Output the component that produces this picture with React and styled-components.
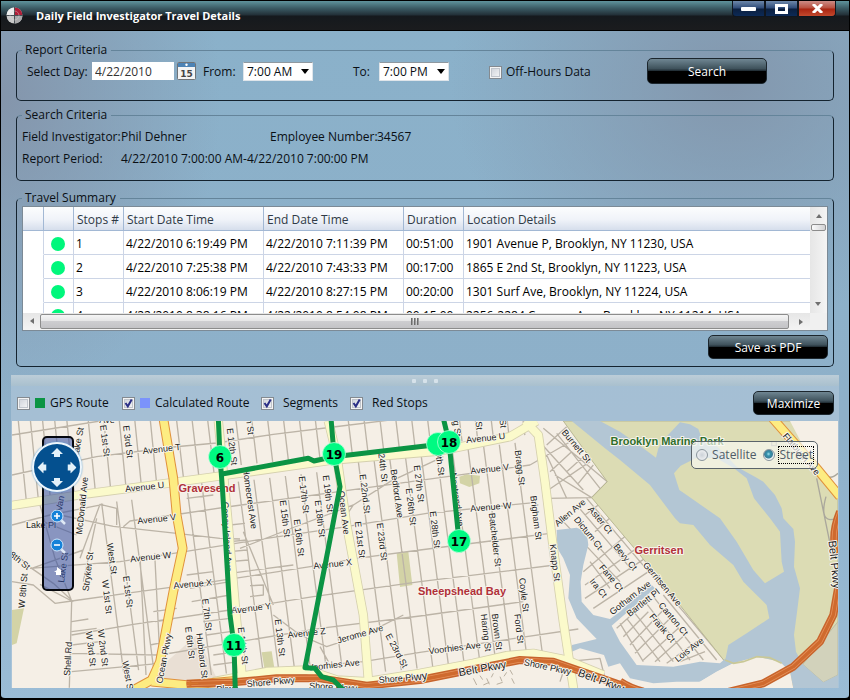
import React, { useState } from "react";
import styled, { createGlobalStyle } from "styled-components";

const GlobalStyle = createGlobalStyle`
  * { box-sizing: border-box; }
  body { margin: 0; background: #000; }
  body, button, input, select {
    font-family: "Open Sans", "Noto Sans", sans-serif;
    font-size: 12px;
    line-height: 16px;
    color: #0a0f14;
  }
  fieldset, legend, button, input { margin: 0; }
`;

/* ---------- window frame ---------- */

const Window = styled.main`
  display: flex;
  flex-direction: column;
  min-height: 100vh;
  border: 1px solid #000;
  border-bottom-width: 2px;
  border-radius: 0 0 5px 5px;
  background:
    radial-gradient(280px 240px at 86% 12%, #8397ad, rgba(132, 151, 173, 0)),
    radial-gradient(220px 300px at 0 14%, #8495ab, rgba(132, 149, 171, 0)),
    linear-gradient(#8ab1ca, #8eb0c9 60%, #9abcd6);
`;

const TitleBar = styled.header`
  display: flex;
  align-items: flex-start;
  height: 30px;
  padding: 0 13px 0 5px;
  border-bottom: 1px solid #000;
  background: linear-gradient(#5f939c 0, #3c5d66 7px, #222f37 14px, #15191d 15px, #1b1c1e 30px);
`;

const Brand = styled.div`
  display: flex;
  flex: 1;
  align-items: center;
  gap: 13px;
  height: 28px;
`;

const Title = styled.h1`
  margin: 0;
  padding-top: 2px;
  color: #fff;
  font-size: 11px;
  font-weight: 700;
  line-height: 16px;
`;

const CaptionButton = styled.button`
  display: flex;
  align-items: center;
  justify-content: center;
  width: ${(p) => (p.$close ? 38 : 33)}px;
  height: 16px;
  padding: 0;
  border: 1px solid #10161e;
  border-top: 0;
  border-radius: ${(p) => (p.$close ? "0 0 4px 0" : p.$first ? "0 0 0 4px" : "0")};
  background: ${(p) =>
    p.$close
      ? "linear-gradient(#cc8c86 0, #b8503f 7px, #a92411 8px, #c24a2e 15px)"
      : "linear-gradient(#6d88aa 0, #2f4b78 7px, #0b1f3f 8px, #0c2a56 15px)"};
`;

/* ---------- form parts ---------- */

const Body = styled.div`
  padding: 11px 15px 8px;
`;

const Group = styled.fieldset`
  min-width: 0;
  padding: 0 5px ${(p) => p.$bottom}px;
  margin-bottom: ${(p) => p.$gap || 0}px;
  border: 1px solid #14232f;
  border-top-color: #64849a;
  border-radius: 5px;
`;

const Legend = styled.legend`
  padding: 0 4px 0 3px;
  font-size: 12px;
  line-height: 16px;
`;

const CriteriaRow = styled.div`
  display: grid;
  grid-template-columns: 65px 85px 26px 40px 110px 26px 110px 158px auto;
  justify-content: start;
  align-items: center;
  height: 26px;
  padding-left: 5px;
  white-space: nowrap;
  > label { padding-top: 2px; }
`;

const DateInput = styled.input`
  width: 82px;
  height: 18px;
  padding: 0 3px;
  border: 0;
  background: #fff;
  color: #333;
`;

const IconButton = styled.button`
  display: flex;
  padding: 0;
  border: 0;
  background: none;
`;

const SelectBox = styled.span`
  position: relative;
  display: block;
  width: 70px;
  height: 19px;
  svg { position: absolute; right: 4px; top: 7px; pointer-events: none; }
`;

const Select = styled.select`
  appearance: none;
  width: 100%;
  height: 100%;
  padding: 1px 0 0 3px;
  border: 1px solid #dfe5ea;
  border-top-color: #8f989f;
  border-radius: 0;
  background: #fff;
`;

const CheckLabel = styled.label`
  display: flex;
  align-items: center;
  gap: ${(p) => p.$gap}px;
  white-space: nowrap;
`;

const CheckBox = styled.span`
  position: relative;
  display: block;
  width: 13px;
  height: 13px;
  input {
    appearance: none;
    display: block;
    width: 13px;
    height: 13px;
    border: 1px solid #848a90;
    background: linear-gradient(135deg, #c9ced6, #fafafa);
    box-shadow: inset 0 0 0 1px #f4f4f4, inset 0 0 0 2px #c0c5cc;
  }
  svg { position: absolute; left: 1px; top: 1px; pointer-events: none; }
`;

const Swatch = styled.i`
  width: 10px;
  height: 10px;
  background: ${(p) => p.$color};
`;

const GlossButton = styled.button`
  width: ${(p) => p.$width || 120}px;
  height: ${(p) => p.$height || 24}px;
  padding: 2px 0 0;
  border: 1px solid #1c262d;
  border-radius: 5px;
  background: linear-gradient(#6f8692 0, #3f525c 40%, #202c33 49%, #000 50%, #000 100%);
  color: #fff;
`;

const InfoList = styled.dl`
  display: grid;
  grid-template-columns: 99px 149px 107px 1fr;
  row-gap: 6px;
  margin: 0;
  padding-top: 6px;
  white-space: nowrap;
  dt, dd { margin: 0; line-height: 16px; }
`;

const Period = styled.dd`
  grid-column: 2 / -1;
`;

/* ---------- travel table ---------- */

const GridFrame = styled.div`
  display: grid;
  grid-template-columns: 1fr 17px;
  grid-template-rows: 106px 17px;
  border: 1px solid #7c8a96;
  background: #f0f0f0;
`;

const TableClip = styled.div`
  overflow: hidden;
  background: #fff;
`;

const StopsTable = styled.table`
  width: 100%;
  border-collapse: separate;
  border-spacing: 0;
  table-layout: fixed;
  th, td {
    height: 24px;
    padding: 2px 0 0 2px;
    border-right: 1px solid #ccd5e6;
    border-bottom: 1px solid #ccd5e6;
    text-align: left;
    white-space: nowrap;
    font-weight: 400;
    color: #000;
  }
  th {
    padding-left: 3px;
    border-color: #a2b8d4;
    background: linear-gradient(#fcfdfe, #f0f3f9 55%, #d6deec);
    color: #2f3a46;
  }
  th:last-child, td:last-child { border-right: 0; }
  td:first-child { border-bottom-color: #fff; }
`;

const Col = styled.col`
  width: ${(p) => (p.$w ? p.$w + "px" : "auto")};
`;

const StopDot = styled.span`
  display: block;
  width: 14px;
  height: 14px;
  margin-left: 5px;
  border-radius: 50%;
  background: #00f77c;
`;

const VScroll = styled.div`
  display: flex;
  flex-direction: column;
  align-items: center;
  background: linear-gradient(90deg, #e6e6e6, #f4f4f4);
`;

const HScroll = styled.div`
  display: flex;
  align-items: center;
  background: linear-gradient(#e6e6e6, #f4f4f4);
`;

const ScrollArrow = styled.button`
  display: flex;
  align-items: center;
  justify-content: center;
  width: 17px;
  height: 17px;
  padding: 0;
  border: 0;
  background: none;
  transform: rotate(${(p) => p.$turn}deg);
`;

const VThumb = styled.div`
  width: 15px;
  height: 7px;
  margin-bottom: auto;
  border: 1px solid #8c8c8c;
  border-radius: 2px;
  background: linear-gradient(90deg, #fafafa, #d2d2d4);
`;

const HThumb = styled.div`
  display: flex;
  flex: 1;
  align-items: center;
  justify-content: center;
  gap: 1px;
  height: 15px;
  margin-right: 4px;
  border: 1px solid #8c8c8c;
  border-radius: 2px;
  background: linear-gradient(#f5f5f5, #e6e6e7 45%, #cdcdd0 50%, #c3c3c6);
`;

const Grip = styled.i`
  width: 2px;
  height: 7px;
  background: linear-gradient(90deg, #555, #b5b5b5);
`;

const Actions = styled.div`
  display: flex;
  justify-content: flex-end;
  padding-top: 4px;
`;

/* ---------- map pane ---------- */

const MapPane = styled.section`
  display: flex;
  flex: 1;
  flex-direction: column;
  margin: 0 10px 10px;
  background: rgba(180, 202, 220, 0.6);
`;

const Splitter = styled.div`
  display: flex;
  align-items: center;
  justify-content: center;
  gap: 7px;
  height: 11px;
  background: linear-gradient(#bccdd8, #a9c0ce);
`;

const SplitDot = styled.i`
  width: 4px;
  height: 4px;
  border-radius: 1px;
  background: #d6e2ea;
`;

const MapToolbar = styled.div`
  display: grid;
  grid-template-columns: 105px 139px 89px 1fr auto;
  align-items: center;
  height: 35px;
  padding: 0 5px 1px 6px;
`;

const MapView = styled.div`
  position: relative;
  display: flex;
  flex: 1;
  min-height: 267px;
  margin: 0 1px;
  overflow: hidden;
  background: #f5efe6;
`;

const MapSvg = styled.svg`
  flex: 1;
  min-width: 0;
  height: auto;
`;

const RoadLabel = styled.text`
  font-family: "Liberation Sans", Arial, sans-serif;
  font-size: ${(p) => p.$size || 9}px;
  font-weight: ${(p) => (p.$bold ? 700 : 400)};
  fill: ${(p) => p.$color || "#1c1c1c"};
  stroke: #f8f4ec;
  stroke-width: 2px;
  stroke-linejoin: round;
  paint-order: stroke;
  text-anchor: middle;
`;

const StopNumber = styled.text`
  font-family: "DejaVu Sans", Verdana, sans-serif;
  font-size: 12px;
  font-weight: 700;
  fill: #000;
  text-anchor: middle;
`;

const NavPanel = styled.div`
  position: absolute;
  left: 30px;
  top: 15px;
  display: flex;
  flex-direction: column;
  align-items: center;
  width: 32px;
  height: 155px;
  border: 2px solid #05070d;
  border-radius: 5px;
  background: rgba(48, 74, 160, 0.55);
`;

const PanPad = styled.div`
  flex: none;
  display: grid;
  grid-template-columns: repeat(3, 15px);
  grid-template-rows: repeat(3, 15px);
  place-content: center;
  place-items: center;
  width: 50px;
  height: 50px;
  margin: 4px 2px 17px 0;
  border: 2px solid #eef6fc;
  border-radius: 50%;
  background: #04508f;
  box-shadow: 0 0 2px #4d9ad6;
`;

const PanButton = styled.button`
  grid-area: ${(p) => p.$area};
  display: flex;
  padding: 0;
  border: 0;
  background: none;
  transform: rotate(${(p) => p.$turn}deg);
`;

const ZoomButton = styled(IconButton)`
  margin-bottom: 13px;
`;

const LayerPicker = styled.div`
  position: absolute;
  right: 20px;
  top: 20px;
  display: flex;
  align-items: center;
  gap: 6px;
  height: 28px;
  padding: 0 3px 0 4px;
  border: 1px solid #5b646b;
  border-radius: 5px;
  background: rgba(250, 250, 246, 0.66);
`;

const RadioLabel = styled.label`
  display: flex;
  align-items: center;
  gap: 3px;
  color: #4f5c68;
  span { border: 1px dotted ${(p) => (p.$focus ? "#000" : "transparent")}; }
  input {
    appearance: none;
    width: 12px;
    height: 12px;
    border: 1px solid #8a959d;
    border-radius: 50%;
    background: radial-gradient(circle, #ccd2d8 0, #e6e9ec 4px);
  }
  input:checked {
    background: radial-gradient(circle at 45% 40%, #9fe0ee 0, #3592ac 2px, #3d7f98 4px, #eef3f5 5px);
  }
`;

/* ---------- map data: survey units are thirds of a pixel ---------- */

const OX = 36;
const OY = 18;

const slantSet = (x0, x1, step, top, bottom, slope = 0.125) => {
  const parts = [];
  for (let x = x0; x <= x1; x += step) {
    const t = top - (x - x0) * 0.12;
    const b = bottom - (x - x0) * 0.1;
    parts.push(`M${x} ${t}L${x + (b - t) * slope} ${b}`);
  }
  return parts.join("");
};

const STREETS = [
  slantSet(55, 210, 36, 18, 262, 0.1),
  slantSet(265, 480, 46, 18, 225, 0.1),
  slantSet(530, 650, 46, 18, 190, 0.12),
  slantSet(708, 960, 47, 18, 150, 0.12),
  slantSet(1045, 1570, 47, 18, 112, 0.12),
  slantSet(305, 400, 45, 265, 770, 0.13),
  slantSet(420, 500, 44, 420, 780, 0.05),
  slantSet(560, 640, 45, 210, 780, 0.13),
  slantSet(715, 960, 47, 200, 765, 0.13),
  slantSet(1075, 1585, 47, 140, 770, 0.13),
].join("");

const LOCAL_ROADS = [
  "M36 180L290 125L520 96L650 84L820 58L1000 36L1260 4",
  "M36 60L300 18M36 330L150 300L310 268",
  "M180 300L340 334L530 355L660 370L720 372",
  "M370 335L390 318L540 297L680 276L1000 232L1390 178L1590 150",
  "M90 460L360 440L540 412L800 370L1020 338L1280 295L1610 262",
  "M120 508L215 558L400 532L640 500L950 452L1070 430L1260 405L1650 355",
  "M215 660L400 628L690 585L940 545L1260 500L1665 450",
  "M210 715L480 720L700 683L960 640L1260 603L1570 560",
  "M215 770L480 745M890 758L1090 740L1260 712L1735 642",
  "M120 270L165 430L215 558L208 818M36 408L95 460L160 505L220 560M36 500L100 510L165 565L215 558",
  "M95 460L250 405M130 320L230 360M240 430L300 268L350 280L350 330M290 310L250 500",
  "M215 620L265 612M215 650L290 640M215 690L300 680M460 590L530 580M465 620L520 612M450 690L500 680",
  "M560 250L640 240M560 480L640 470M570 520L690 500M575 560L690 540M610 620L690 610M620 660L690 650M640 720L695 712M640 750L700 742",
  "M690 330L735 325M690 380L740 375M690 410L740 405M690 440L745 435M690 475L880 450M730 350L820 570M750 512L790 510L790 540L750 545",
  "M720 400L900 330L1060 270L1170 200L1330 125M1060 270L1040 300M820 600L900 660L980 695L1100 655L1210 600M960 695L985 740",
  "M1630 40L1822 200L1775 248L1640 250M1645 225L1770 140M1590 150L1720 75M1670 55L1800 220M1700 35L1640 90M1665 180L1775 248M1640 120L1700 250",
  "M1600 60L1750 225M1715 110L1650 170M1745 130L1700 170M1780 150L1735 205",
  "M1680 800L1700 740L1800 730L1815 790M1720 740L1725 820M1700 730L1690 690",
  "M1760 250L1920 440L2050 590L2175 738M1730 270L1900 470M1690 320L1860 500M1740 330L1860 470M1770 440L1830 520",
  "M1755 300L1815 255M1785 350L1850 290M1750 470L1880 360M1755 510L1910 400M1755 550L1935 430M1780 580L1960 460",
  "M1850 640L1900 595M1870 665L1945 590M1890 690L1990 585M1905 715L2015 605M1930 735L2035 640M1965 740L2060 655M2000 745L2090 680M2040 740L2115 710",
  "M1860 625L1930 740M1880 610L1980 740M1905 595L2020 740M1935 560L2070 735M1960 545L2110 735M1990 540L2150 735",
  "M2450 190L2490 380L2510 400M2460 200L2505 420M2475 180L2514 175M2480 240Q2460 300 2490 315L2514 312M2490 200L2514 190",
].join("");

const FOOTPRINTS =
  "M1420 790l10 20M1440 782l8 12M1460 790l8 18M1480 775l-6 12M1500 785l6 14M1520 772l-8 12M1535 790l8 16M1450 810l18 -8M1490 808l18 -6M1530 765l8 14";

const PARK = "M1690 18L1822 200L1775 248L1920 420L2175 740L2200 745L2270 725L2340 740L2370 770L2380 820L2514 820L2514 18Z";

const WATER =
  "M1715 18L1800 18L1860 50L1920 92L1968 128L1975 100L1995 70L2040 22L2070 28L2095 42L2105 70L2150 92L2210 155L2270 188L2290 200L2325 240L2345 280L2350 310L2380 342L2385 380L2382 455L2400 520L2390 600L2382 660L2388 710L2408 748L2470 802L2514 780L2514 820L2380 820L2370 770L2340 740L2270 725L2200 745L2150 770L2100 800L2030 800L1960 805L1890 790L1860 745L1825 755L1812 720L1740 700L1712 712L1716 690L1790 672L1730 610L1705 550L1710 480L1690 430L1672 400L1670 345L1730 338L1760 350L1765 390L1750 450L1742 500L1745 560L1780 600L1830 612L1860 590L1950 505L1965 520L1835 632L1860 680L1910 750L2020 755L2100 740L2160 745L2177 730L2185 690L2240 655L2308 610L2300 570L2260 530L2230 500L2200 450L2130 390L2080 330L2040 325L2025 310L1950 210L1860 135L1815 100Z";

const ISLAND = "M2022 175L2042 152L2090 128L2150 130L2200 158L2240 190L2262 250L2310 310L2340 350L2345 440L2352 470L2295 505L2260 465L2210 380L2160 310L2060 240L2038 225Z";

const PALE_ROADS = [
  "M30 272L250 238L500 205L660 183L1000 135L1320 108L1530 65L1590 30L1610 18",
  "M655 18L682 300L708 600L728 800",
  "M985 18L1010 120L1040 330L1090 600L1105 795",
  "M1575 18L1615 60L1635 200L1660 400L1690 620L1722 830",
  "M640 800L800 770L920 765L1010 795L1100 800L1260 775L1420 745L1520 722L1600 715L1700 735L1810 780",
];

const YELLOW_ROADS = [
  "M490 10L520 190L530 300L548 400L520 530L480 740L455 795L400 825",
  "M455 800L560 810L700 798",
  "M2318 10L2450 160L2520 245",
];

const HIGHWAYS = [
  "M560 806L700 802L830 790L960 790L1100 812L1260 795L1410 765L1560 735L1660 740L1760 775L1890 820",
  "M1860 800Q1890 820 1930 830M2180 832L2290 805L2380 755L2460 680L2500 600L2514 520",
  "M2520 290Q2500 340 2503 380L2516 430",
];

const GPS_ROUTE = [
  "M655 10L660 125L668 230L690 600L702 690L706 830",
  "M662 178L925 130L942 138L1002 125L1320 88",
  "M993 10L1002 118L1020 215L985 400L915 758L945 760L965 785L1000 795L1035 830",
  "M1330 10L1347 80L1377 378",
];

const LABELS = [
  ["Avenue T", 487, 112, -6], ["Avenue U", 435, 226, -6], ["Avenue V", 472, 320, -6],
  ["Avenue W", 454, 434, -6], ["Avenue X", 580, 516, -5], ["Avenue Y", 757, 588, -6],
  ["Avenue Z", 922, 664, -6], ["Avenue X", 1000, 455, -6], ["Avenue U", 1457, 78, -6],
  ["Avenue V", 1470, 172, -6], ["Avenue W", 1473, 286, -5], ["Ave", 320, 24, 0],
  ["E 1st St", 307, 77, 83], ["E 3rd St", 374, 82, 83], ["Lake St", 244, 85, -80],
  ["Van", 190, 268, -80], ["McDonald Ave", 254, 274, -84], ["Lake Pl", 122, 340, 0],
  ["Lake St", 199, 458, -82], ["8th St", 54, 444, 38], ["W 8th St", 78, 528, -85],
  ["Stryker St", 274, 472, -83], ["West St", 328, 432, 82], ["W 1st St", 312, 545, 83],
  ["E 1st St", 374, 532, 83], ["W 3rd St", 264, 703, 83], ["W 2nd St", 300, 698, 83],
  ["Shell Rd", 214, 733, -87], ["West St", 374, 785, 80], ["Ocean Pkwy", 502, 732, -79],
  ["E 7th St", 612, 600, 83], ["E 6th St", 560, 683, 83], ["Hubbard St", 597, 723, 83],
  ["E 12th St", 688, 96, 83], ["Homecrest Ave", 742, 252, 82], ["n St", 742, 36, 83],
  ["Coney Island Ave", 672, 366, 87], ["E 15th St", 846, 313, 83], ["E 16th St", 888, 370, 83],
  ["E 17th St", 903, 240, 83], ["E 18th St", 950, 313, 83], ["E 19th St", 974, 238, 83],
  ["Ocean Ave", 1023, 294, 83], ["E 22nd St", 1086, 238, 83], ["E 21st St", 1072, 374, 83],
  ["E 23rd St", 1138, 380, 83], ["24th St", 1140, 160, 83], ["Bedford Ave", 1182, 236, 82],
  ["E 26th St", 1224, 276, 83], ["E 27th St", 1249, 206, 83], ["9th St", 1310, 146, 82],
  ["E 28th St", 1297, 346, 83], ["Nostrand Ave", 1362, 256, 82], ["g St", 1362, 42, 82],
  ["St", 1428, 34, 83], ["St", 1500, 28, 83], ["Bragg St", 1550, 160, 83],
  ["Brigham St", 1600, 308, 83], ["Batchelder St", 1475, 374, 83], ["Knapp St", 1655, 444, 83],
  ["Coyle St", 1563, 540, 83], ["Brown St", 1482, 652, 83], ["Haring St", 1448, 654, 83],
  ["Ford St", 1548, 643, 83], ["E 13th St", 832, 668, 83], ["E 14th St", 720, 694, 83],
  ["Jerome Ave", 1083, 666, -16], ["E 23rd St", 1182, 710, 62], ["Voorhies Ave", 1002, 758, -6],
  ["Voorhies Ave", 1366, 708, -7], ["Shore Pkwy", 814, 810, -5], ["Shore Pkwy", 1000, 826, 3],
  ["Shore Pkwy", 1208, 798, -5], ["Shore Pkwy", 1640, 766, 12], ["Ave", 718, 595, 0],
  ["Belt Pkwy", 1448, 772, -10, 11], ["Belt Pkwy", 1800, 806, 20, 11], ["Belt Pkwy", 2494, 450, 84, 11],
  ["wy", 1264, 794, -8, 11], ["Pkwy", 680, 830, 0],
  ["Burnett St", 1722, 98, 50], ["Allen Ave", 1716, 300, -40], ["Aster Ct", 1794, 320, 50],
  ["Dictum Ct", 1758, 360, 51], ["Bevy Ct", 1870, 432, 50], ["Fane Ct", 1828, 494, 50],
  ["Ira Ct", 1788, 526, 50], ["Gotham Ave", 1896, 556, -38], ["Bartlett Pl", 1936, 570, -38],
  ["Gerritsen Ave", 1980, 512, 50], ["Canton Ct", 2012, 618, 50], ["Frank Ct", 1980, 644, 50],
  ["Lois Ave", 2072, 710, -38], ["Flatbush Ave", 2398, 122, 50],
];

const PLACES = [
  ["Gravesend", 622, 232, "#b03038"], ["Sheepshead Bay", 1386, 540, "#b03038"],
  ["Gerritsen", 1978, 418, "#b03038"], ["Brooklyn Marine Park", 2002, 89, "#2f6f2c"],
];

const STOPS = [
  ["", 1315, 88], ["6", 660, 125], ["11", 702, 690], ["19", 1002, 118], ["18", 1347, 80], ["17", 1377, 378],
];

function StreetMap() {
  const at = (x, y) => [Math.round((x - OX) / 3), Math.round((y - OY) / 3)];
  return (
    <MapSvg viewBox="0 0 826 267" preserveAspectRatio="xMinYMin slice" role="img" aria-label="Street map of the travel route">
      <g transform={`scale(0.33333) translate(${-OX} ${-OY})`} fill="none" strokeLinejoin="round">
        <path d="M-50 18H3000V1600H-50Z" fill="#f5efe6" />
        <path d="M500 740L590 660L650 790L480 800Z" fill="#e9dfd4" />
        <path d="M36 585L72 580L50 685L36 690ZM1190 415L1225 410L1237 510L1200 516ZM785 712L815 709L824 765L795 770ZM1378 185L1400 178L1440 182L1438 205L1408 216L1380 205Z" fill="#d3d3a6" />
        <path d={STREETS + LOCAL_ROADS} stroke="#bcb4a7" strokeWidth="4" />
        <path d={FOOTPRINTS} stroke="#b8afa0" strokeWidth="3" />
        <path d={PARK} fill="#dcdcb4" stroke="#b9b894" strokeWidth="3" />
        <path d="M2370 18L2514 18L2514 220L2450 170Z" fill="#f5efe6" />
        <path d="M2408 748L2470 802L2514 780L2514 620L2440 710Z" fill="#d2d2bb" stroke="#bdbda4" strokeWidth="3" />
        <path d={WATER} fill="#b3c6d4" />
        <path d="M2150 770L2200 745L2270 725L2340 740L2370 770L2380 822L1980 822L2100 800Z" fill="#f5efe6" />
        <path d="M2175 735L2200 745L2230 740L2270 725L2310 728L2345 745" stroke="#c9c896" strokeWidth="5" />
        <path d={ISLAND} fill="#dcdcb4" />
        <path d="M2315 80h14v12h-14zM2450 190L2490 385M2460 172Q2490 200 2514 175M2478 245Q2460 310 2490 314L2514 312" stroke="#aaa79c" strokeWidth="4" />
        {PALE_ROADS.map((d) => <path key={d} d={d} stroke="#d5d0ae" strokeWidth="28" />)}
        {PALE_ROADS.map((d) => <path key={d} d={d} stroke="#fbfacb" strokeWidth="23" />)}
        {YELLOW_ROADS.map((d) => <path key={d} d={d} stroke="#e0913c" strokeWidth="29" />)}
        {YELLOW_ROADS.map((d) => <path key={d} d={d} stroke="#fdec82" strokeWidth="23" />)}
        {HIGHWAYS.map((d) => <path key={d} d={d} stroke="#c7642c" strokeWidth="24" />)}
        {HIGHWAYS.map((d) => <path key={d} d={d} stroke="#e69058" strokeWidth="15" />)}
        {HIGHWAYS.map((d) => <path key={d} d={d} stroke="#cf6a2e" strokeWidth="10" />)}
        <path d="M595 805L562 806M574 799L562 806L574 813" stroke="#d5762e" strokeWidth="4" />
      </g>
      {LABELS.map(([text, gx, gy, turn, size], i) => {
        const [x, y] = at(gx, gy);
        return <RoadLabel key={i} $size={size} transform={`translate(${x} ${y}) rotate(${turn})`}>{text}</RoadLabel>;
      })}
      {PLACES.map(([text, gx, gy, color]) => {
        const [x, y] = at(gx, gy);
        return <RoadLabel key={text} $size={11} $bold $color={color} x={x} y={y}>{text}</RoadLabel>;
      })}
      <g transform={`scale(0.33333) translate(${-OX} ${-OY})`} fill="none" stroke="#0b9444" strokeWidth="15" strokeLinejoin="round">
        {GPS_ROUTE.map((d) => <path key={d} d={d} />)}
      </g>
      {STOPS.map(([text, gx, gy]) => {
        const [x, y] = at(gx, gy);
        return (
          <g key={gx}>
            <circle cx={x} cy={y} r="11.5" fill="#00fa82" stroke="#c8ffe2" strokeWidth="0.7" />
            <StopNumber x={x} y={y + 5}>{text}</StopNumber>
          </g>
        );
      })}
    </MapSvg>
  );
}

/* ---------- small drawings ---------- */

const Logo = () => (
  <svg width="17" height="17" viewBox="0 0 17 17" aria-hidden="true">
    <circle cx="8.5" cy="8.5" r="8" fill="#c9c9c9" />
    <path d="M8.5 8.5V.5A8 8 0 0 0 .5 8.5Z" fill="#eee" />
    <path d="M8.5 8.5V.5A8 8 0 0 1 16.5 8.5Z" fill="#b01e38" />
    <path d="M8.5 8.5V16.5A8 8 0 0 0 16.5 8.5Z" fill="#a9a9ab" />
    <path d="M8.5 0V17M0 8.5H17" stroke="#4a5055" strokeWidth="1" />
    <circle cx="8.5" cy="8.5" r="4.5" fill="none" stroke="#d9d9d9" strokeWidth="1" opacity=".4" />
  </svg>
);

const CalendarIcon = () => (
  <svg width="19" height="18" viewBox="0 0 19 18" aria-hidden="true">
    <rect x=".5" y=".5" width="18" height="17" rx="1" fill="#f4f4f4" stroke="#6f7377" />
    <rect x="1" y="1" width="17" height="4" fill="#4d83b5" />
    <circle cx="9.5" cy="2.8" r="1.2" fill="#fff" />
    <text x="9.5" y="15" textAnchor="middle" fontFamily="DejaVu Sans, sans-serif" fontSize="9" fontWeight="700" fill="#444">15</text>
  </svg>
);

const DropArrow = () => (
  <svg width="8" height="5" viewBox="0 0 8 5" aria-hidden="true"><path d="M0 0H8L4 5Z" fill="#000" /></svg>
);

const TickMark = () => (
  <svg width="11" height="11" viewBox="0 0 11 11" aria-hidden="true"><path d="M2.5 5L4.8 8.3L8.7 1.5" fill="none" stroke="#2b2f86" strokeWidth="2" /></svg>
);

const Triangle = () => (
  <svg width="6" height="4" viewBox="0 0 6 4" aria-hidden="true"><path d="M3 0L6 4H0Z" fill="#6f6f6f" /></svg>
);

const PanArrow = () => (
  <svg width="12" height="9" viewBox="0 0 12 9" aria-hidden="true"><path d="M6 0L12 6H9V9H3V6H0Z" fill="#e3f1fa" /></svg>
);

const ZoomIcon = ({ plus }) => (
  <svg width="17" height="16" viewBox="0 0 17 16" aria-hidden="true">
    <path d="M10 10L15 15" stroke="#dfe9f5" strokeWidth="2.5" />
    <circle cx="7" cy="7" r="6" fill="#1582d8" stroke="#cfe6fa" />
    <path d={plus ? "M4 7H10M7 4V10" : "M4 7H10"} stroke="#fff" strokeWidth="1.6" />
  </svg>
);

/* ---------- composed controls ---------- */

function Check({ label, swatch, gap = 5, initial = false }) {
  const [on, setOn] = useState(initial);
  return (
    <CheckLabel $gap={gap}>
      <CheckBox>
        <input type="checkbox" checked={on} onChange={() => setOn(!on)} />
        {on && <TickMark />}
      </CheckBox>
      {swatch && <Swatch $color={swatch} />}
      {label}
    </CheckLabel>
  );
}

function TimeSelect({ id, value }) {
  return (
    <SelectBox>
      <Select id={id} defaultValue={value}><option>{value}</option></Select>
      <DropArrow />
    </SelectBox>
  );
}

const ROWS = [
  ["1", "4/22/2010 6:19:49 PM", "4/22/2010 7:11:39 PM", "00:51:00", "1901 Avenue P, Brooklyn, NY 11230, USA"],
  ["2", "4/22/2010 7:25:38 PM", "4/22/2010 7:43:33 PM", "00:17:00", "1865 E 2nd St, Brooklyn, NY 11223, USA"],
  ["3", "4/22/2010 8:06:19 PM", "4/22/2010 8:27:15 PM", "00:20:00", "1301 Surf Ave, Brooklyn, NY 11224, USA"],
  ["4", "4/22/2010 8:38:16 PM", "4/22/2010 8:54:08 PM", "00:15:00", "2256-2284 Cropsey Ave, Brooklyn, NY 11214, USA"],
];

export default function App() {
  const [layer, setLayer] = useState("Street");
  return (
    <>
      <GlobalStyle />
      <Window>
        <TitleBar>
          <Brand><Logo /><Title>Daily Field Investigator Travel Details</Title></Brand>
          <CaptionButton $first aria-label="Minimize">
            <svg width="15" height="4"><rect width="15" height="4" rx="1" fill="#fff" /></svg>
          </CaptionButton>
          <CaptionButton aria-label="Maximize window">
            <svg width="13" height="10"><rect x="1.5" y="1.5" width="10" height="7" fill="none" stroke="#fff" strokeWidth="3" /></svg>
          </CaptionButton>
          <CaptionButton $close aria-label="Close">
            <svg width="13" height="9"><path d="M2 0L11 9M11 0L2 9" stroke="#fff" strokeWidth="3" /></svg>
          </CaptionButton>
        </TitleBar>

        <Body>
          <Group $bottom={16} $gap={6}>
            <Legend>Report Criteria</Legend>
            <CriteriaRow>
              <label htmlFor="day">Select Day:</label>
              <DateInput id="day" defaultValue="4/22/2010" />
              <IconButton aria-label="Open calendar"><CalendarIcon /></IconButton>
              <label htmlFor="from">From:</label>
              <TimeSelect id="from" value="7:00 AM" />
              <label htmlFor="to">To:</label>
              <TimeSelect id="to" value="7:00 PM" />
              <Check label="Off-Hours Data" gap={4} />
              <GlossButton $height={26}>Search</GlossButton>
            </CriteriaRow>
          </Group>

          <Group $bottom={13} $gap={9}>
            <Legend>Search Criteria</Legend>
            <InfoList>
              <dt>Field Investigator:</dt><dd>Phil Dehner</dd>
              <dt>Employee Number:</dt><dd>34567</dd>
              <dt>Report Period:</dt><Period>4/22/2010 7:00:00 AM-4/22/2010 7:00:00 PM</Period>
            </InfoList>
          </Group>

          <Group $bottom={7}>
            <Legend>Travel Summary</Legend>
            <GridFrame>
              <TableClip>
                <StopsTable>
                  <colgroup>
                    <Col $w={21} /><Col $w={30} /><Col $w={50} /><Col $w={140} /><Col $w={140} /><Col $w={60} /><Col />
                  </colgroup>
                  <thead>
                    <tr><th /><th /><th>Stops #</th><th>Start Date Time</th><th>End Date Time</th><th>Duration</th><th>Location Details</th></tr>
                  </thead>
                  <tbody>
                    {ROWS.map((row) => (
                      <tr key={row[0]}>
                        <td /><td><StopDot /></td>
                        {row.map((cell) => <td key={cell}>{cell}</td>)}
                      </tr>
                    ))}
                  </tbody>
                </StopsTable>
              </TableClip>
              <VScroll>
                <ScrollArrow $turn={0} aria-label="Scroll up"><Triangle /></ScrollArrow>
                <VThumb />
                <ScrollArrow $turn={180} aria-label="Scroll down"><Triangle /></ScrollArrow>
              </VScroll>
              <HScroll>
                <ScrollArrow $turn={-90} aria-label="Scroll left"><Triangle /></ScrollArrow>
                <HThumb><Grip /><Grip /><Grip /></HThumb>
                <ScrollArrow $turn={90} aria-label="Scroll right"><Triangle /></ScrollArrow>
              </HScroll>
            </GridFrame>
            <Actions><GlossButton>Save as PDF</GlossButton></Actions>
          </Group>
        </Body>

        <MapPane>
          <Splitter><SplitDot /><SplitDot /><SplitDot /></Splitter>
          <MapToolbar>
            <Check label="GPS Route" swatch="#0b9444" />
            <Check label="Calculated Route" swatch="#7b93fb" initial />
            <Check label="Segments" gap={9} initial />
            <Check label="Red Stops" gap={9} initial />
            <GlossButton $width={81}>Maximize</GlossButton>
          </MapToolbar>
          <MapView>
            <StreetMap />
            <NavPanel>
              <PanPad>
                <PanButton $area="1 / 2" $turn={0} aria-label="Pan north"><PanArrow /></PanButton>
                <PanButton $area="2 / 1" $turn={-90} aria-label="Pan west"><PanArrow /></PanButton>
                <PanButton $area="2 / 3" $turn={90} aria-label="Pan east"><PanArrow /></PanButton>
                <PanButton $area="3 / 2" $turn={180} aria-label="Pan south"><PanArrow /></PanButton>
              </PanPad>
              <ZoomButton aria-label="Zoom in"><ZoomIcon plus /></ZoomButton>
              <ZoomButton aria-label="Zoom out"><ZoomIcon /></ZoomButton>
              <svg width="8" height="8" aria-hidden="true"><path d="M3 0L7 3V8H2V5H0L3 3Z" fill="#fff" /></svg>
            </NavPanel>
            <LayerPicker>
              {["Satellite", "Street"].map((name) => (
                <RadioLabel key={name} $focus={layer === name}>
                  <input type="radio" name="layer" checked={layer === name} onChange={() => setLayer(name)} />
                  <span>{name}</span>
                </RadioLabel>
              ))}
            </LayerPicker>
          </MapView>
        </MapPane>
      </Window>
    </>
  );
}
